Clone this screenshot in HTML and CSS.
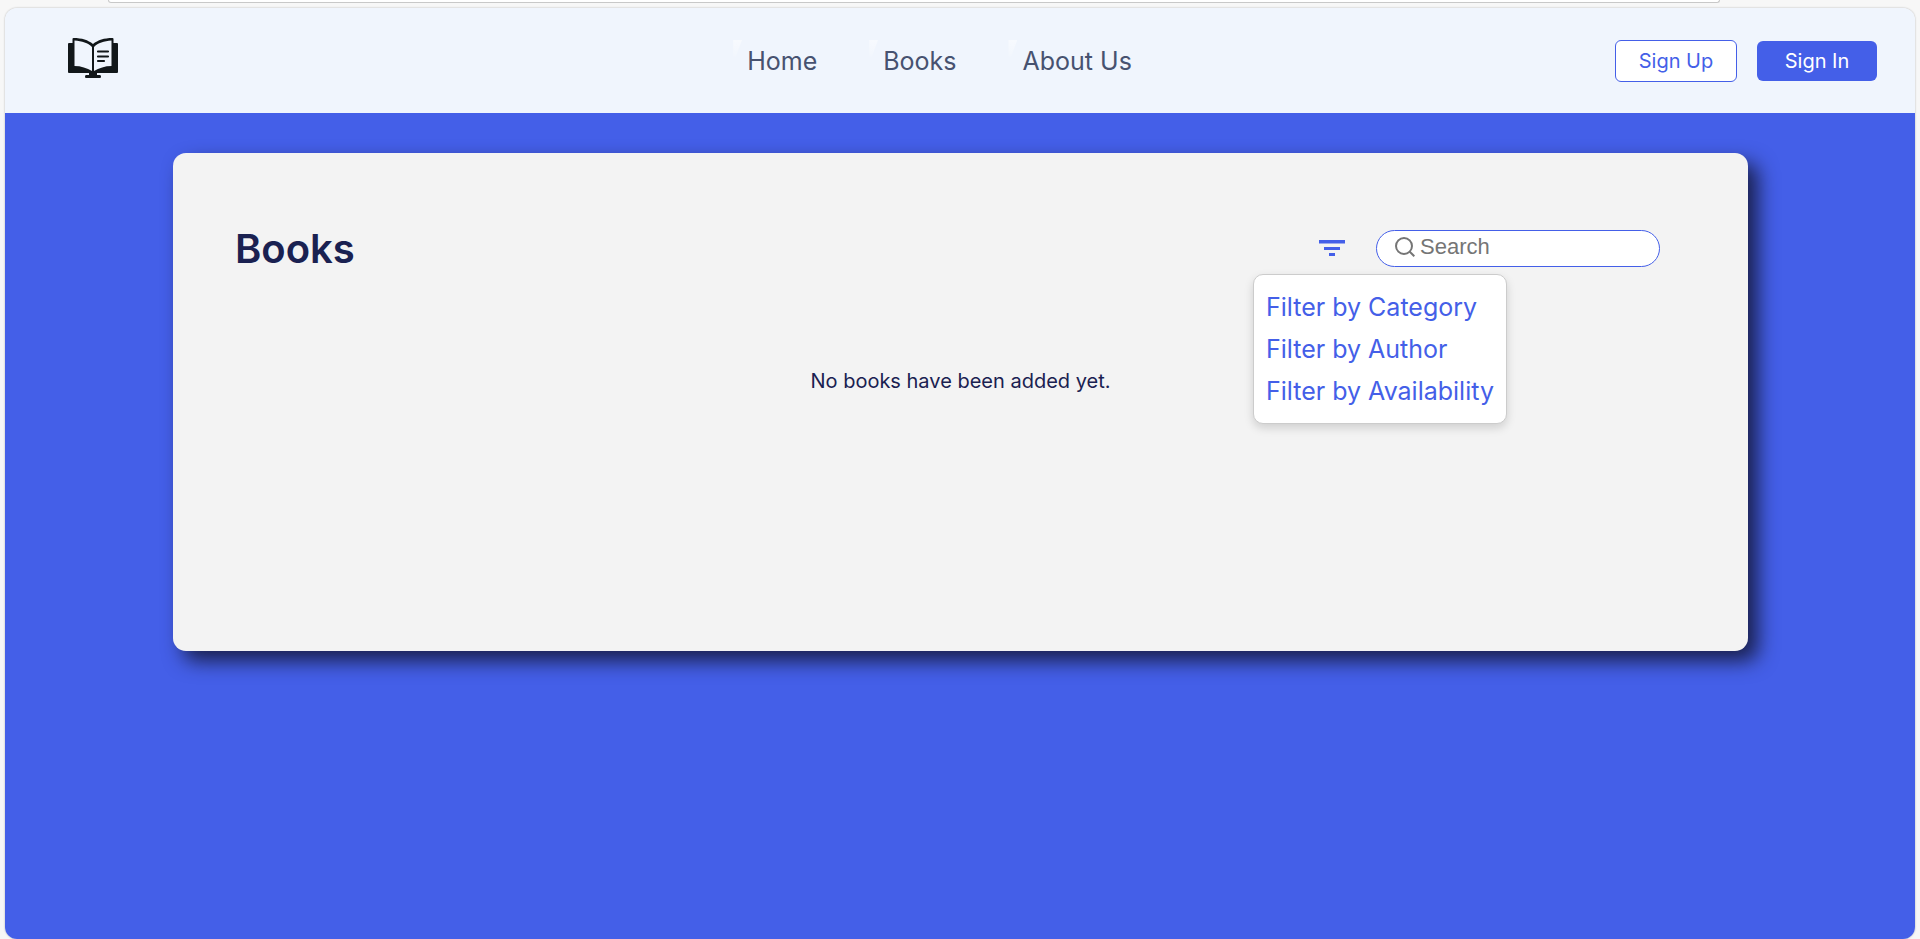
FILE: index.html
```html
<!DOCTYPE html>
<html lang="en">
<head>
<meta charset="utf-8">
<title>Books</title>
<link rel="stylesheet" href="styles.css">
</head>
<body>
<div class="top-strip"></div>
<div class="app">
  <header class="header">
    <a class="logo" href="#" aria-label="Library">
      <svg width="50" height="40" viewBox="0 0 50 40" aria-hidden="true">
        <path fill="#12171a" d="M1 5H4.500V1Q4.500 0 5.500 0C14 0 20 2 25 6C30 2 36 0 44.500 0Q45.500 0 45.500 1V5H49Q50 5 50 6V34Q50 35 49 35H29V37H32Q33 37 33 38.500Q33 40 32 40H18Q17 40 17 38.500Q17 37 18 37H21V35H1Q0 35 0 34V6Q0 5 1 5Z"/>
        <path fill="#f0f5fd" d="M6.500 2.500C14 3 20 5 24 9V33C19 30 13 28 6.500 28ZM43.500 2.500C36 3 30 5 26 9V33C31 30 37 28 43.500 28Z"/>
        <path fill="none" stroke="#12171a" stroke-width="2.200" stroke-linecap="round" d="M30 13.500H40M30 18.500H40M30 23H36"/>
      </svg>
    </a>
    <nav class="nav">
      <a class="nav-link" href="#">Home</a>
      <a class="nav-link" href="#">Books</a>
      <a class="nav-link" href="#">About Us</a>
    </nav>
    <div class="actions">
      <button class="btn btn-outline" type="button">Sign Up</button>
      <button class="btn btn-solid" type="button">Sign In</button>
    </div>
  </header>
  <main class="main">
    <section class="card">
      <div class="toolbar">
        <h1 class="title">Books</h1>
        <div class="tools">
          <div class="filter">
            <button class="filter-btn" type="button" aria-label="Filter">
              <svg width="26" height="16" viewBox="0 0 26 16" aria-hidden="true"><path fill="#445fe8" d="M0 0H26V3.500H0ZM5 7H21V10H5ZM10 13H16V16H10Z"/></svg>
            </button>
            <div class="menu">
              <a class="menu-item" href="#">Filter by Category</a>
              <a class="menu-item" href="#">Filter by Author</a>
              <a class="menu-item" href="#">Filter by Availability</a>
            </div>
          </div>
          <label class="search">
            <svg width="20" height="20" viewBox="0 0 20 20" aria-hidden="true"><g fill="none" stroke="#757575" stroke-width="2"><circle cx="9" cy="9" r="8"/><path d="M14.500 14.500L19.300 19.300"/></g></svg>
            <input class="search-input" type="text" placeholder="Search" aria-label="Search">
          </label>
        </div>
      </div>
      <p class="empty">No books have been added yet.</p>
    </section>
  </main>
</div>
</body>
</html>
```
FILE: styles.css
```css
* { box-sizing: border-box; }

body {
  margin: 0;
  min-height: 100vh;
  display: flex;
  flex-direction: column;
  background: #f7f7f7;
  font-family: Inter, "Liberation Sans", sans-serif;
  color: #1a2151;
}

a { text-decoration: none; }
button { font: inherit; cursor: pointer; }
svg { display: block; }

.top-strip {
  height: 3px;
  margin: 0 200px 5px 108px;
  background: #fff;
  border: 1px solid #c8c8c8;
  border-top: 0;
  border-radius: 0 0 12px 12px;
}

.app {
  flex: 1;
  display: flex;
  flex-direction: column;
  margin: 0 5px;
  border-radius: 12px;
  overflow: hidden;
  box-shadow: 0 0 2px rgba(0, 0, 0, 0.3);
}

.header {
  display: grid;
  grid-template-columns: 1fr auto 1fr;
  align-items: center;
  height: 105px;
  padding: 0 38px 0 63px;
  background: #f0f5fd;
}

.logo { justify-self: start; padding-bottom: 6px; }

.nav { display: flex; gap: 66px; margin-right: 66px; }
.nav-link { position: relative; font-size: 25px; color: #475270; }
.nav-link::before {
  content: "";
  position: absolute;
  top: -6px;
  left: -14px;
  width: 9px;
  height: 17px;
  background: linear-gradient(rgba(255, 255, 255, 0.5), rgba(255, 255, 255, 0.1));
  clip-path: polygon(0 0, 100% 0, 30% 100%, 0 100%);
}

.actions { display: flex; align-items: center; justify-self: end; gap: 20px; }

.btn {
  padding: 0;
  width: 120px;
  height: 40px;
  border: 0;
  border-radius: 6px;
  font-size: 20px;
}
.btn-outline { width: 122px; height: 42px; background: #fff; border: 1px solid #445fe8; color: #445fe8; }
.btn-solid { background: #445fe8; color: #fff; }

.main { flex: 1; padding: 40px 167px 0 168px; background: #445fe8; }

.card {
  min-height: 498px;
  padding: 70px 62px 60px;
  border-radius: 13px;
  background: #f3f3f3;
  box-shadow: 10px 10px 20px #1a204d;
}

.toolbar { display: flex; align-items: center; justify-content: space-between; padding-right: 26px; }
.title { margin: 0; font-size: 40px; line-height: 52px; font-weight: 600; }
.tools { display: flex; align-items: center; gap: 31px; padding-bottom: 2px; }

.filter { position: relative; }
.filter-btn { display: block; padding: 0; border: 0; background: none; }

.menu {
  position: absolute;
  top: 34px;
  left: -66px;
  display: flex;
  flex-direction: column;
  padding: 11px 12px;
  background: #fff;
  border: 1px solid #ccc;
  border-radius: 10px;
  box-shadow: 0 4px 10px rgba(0, 0, 0, 0.15);
}
.menu-item { font-size: 25px; line-height: 42px; color: #445fe8; white-space: nowrap; }

.search {
  display: flex;
  gap: 5px;
  width: 284px;
  height: 37px;
  padding: 6px 18px;
  background: #fff;
  border: 1px solid #445fe8;
  border-radius: 19px;
}
.search svg { flex: none; }
.search-input {
  flex: 1;
  min-width: 0;
  height: 20px;
  padding: 0;
  border: 0;
  outline: 0;
  background: none;
  font-family: "Liberation Sans", Arial, sans-serif;
  font-size: 22px;
  color: #1a2151;
}
.search-input::placeholder { color: #757575; opacity: 1; }

.empty { margin: 92px 0 0; text-align: center; font-size: 20px; line-height: 28px; }
```
